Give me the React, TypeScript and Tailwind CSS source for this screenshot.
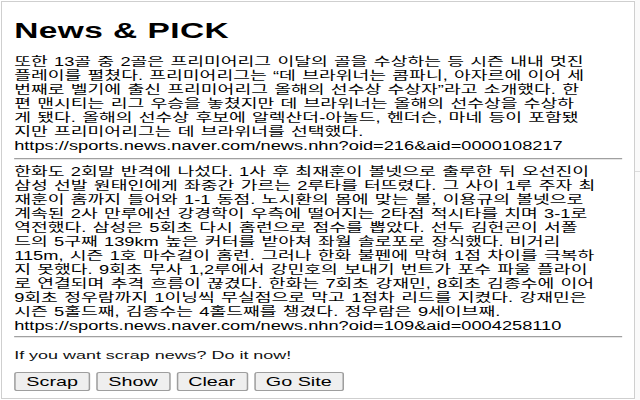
const firstStory = [
  "또한 13골 중 2골은 프리미어리그 이달의 골을 수상하는 등 시즌 내내 멋진",
  "플레이를 펼쳤다. 프리미어리그는 “데 브라위너는 콤파니, 아자르에 이어 세",
  "번째로 벨기에 출신 프리미어리그 올해의 선수상 수상자”라고 소개했다. 한",
  "편 맨시티는 리그 우승을 놓쳤지만 데 브라위너는 올해의 선수상을 수상하",
  "게 됐다. 올해의 선수상 후보에 알렉산더-아놀드, 헨더슨, 마네 등이 포함됐",
  "지만 프리미어리그는 데 브라위너를 선택했다.",
  "https://sports.news.naver.com/news.nhn?oid=216&aid=0000108217",
];

const secondStory = [
  "한화도 2회말 반격에 나섰다. 1사 후 최재훈이 볼넷으로 출루한 뒤 오선진이",
  "삼성 선발 원태인에게 좌중간 가르는 2루타를 터뜨렸다. 그 사이 1루 주자 최",
  "재훈이 홈까지 들어와 1-1 동점. 노시환의 몸에 맞는 볼, 이용규의 볼넷으로",
  "계속된 2사 만루에선 강경학이 우측에 떨어지는 2타점 적시타를 치며 3-1로",
  "역전했다. 삼성은 5회초 다시 홈런으로 점수를 뽑았다. 선두 김헌곤이 서폴",
  "드의 5구째 139km 높은 커터를 받아쳐 좌월 솔로포로 장식했다. 비거리",
  "115m, 시즌 1호 마수걸이 홈런. 그러나 한화 불펜에 막혀 1점 차이를 극복하",
  "지 못했다. 9회초 무사 1,2루에서 강민호의 보내기 번트가 포수 파울 플라이",
  "로 연결되며 추격 흐름이 끊겼다. 한화는 7회초 강재민, 8회초 김종수에 이어",
  "9회초 정우람까지 1이닝씩 무실점으로 막고 1점차 리드를 지켰다. 강재민은",
  "시즌 5홀드째, 김종수는 4홀드째를 챙겼다. 정우람은 9세이브째.",
  "https://sports.news.naver.com/news.nhn?oid=109&aid=0004258110",
];

const actions = ["Scrap", "Show", "Clear", "Go Site"];

const Story = ({ lines, className }: { lines: string[]; className?: string }) => (
  <div className={className}>
    {lines.map((line, i) => (
      <div key={i} className="h-[14px] whitespace-nowrap leading-[14px] [word-spacing:0.8px]">
        {line}
      </div>
    ))}
  </div>
);

const Rule = ({ className }: { className?: string }) => (
  <div className={`h-0 border-t border-b border-t-[#a0a0a0] border-b-[#e6e6e6] ${className ?? ""}`} />
);

export default function App() {
  return (
    <div className="flex h-[400px] w-[640px] bg-white">
      <div className="ml-px mt-px h-[398px] w-[634px] shrink-0 overflow-hidden border border-[#cfcfcf] bg-white">
        {/* popup is 416px wide, stretched to fill the store screenshot */}
        <div className="w-[416px] origin-top-left scale-x-[1.52] px-[8px] font-['Liberation_Sans','Noto_Sans_CJK_KR',sans-serif] text-[12px] text-black">
          <h1 className="pt-[17px] text-[22px] font-bold leading-[24px] tracking-[0.3px]">News &amp; PICK</h1>
          <Story lines={firstStory} className="mt-[12px]" />
          <Rule className="mt-[5px]" />
          <Story lines={secondStory} className="mt-[5px]" />
          <Rule className="mt-[3px]" />
          <p className="mt-[10px] h-[14px] text-[11.8px] leading-[14px] text-[#111]">If you want scrap news? Do it now!</p>
          <div className="mt-[10px] flex gap-[4px]">
            {actions.map((label) => (
              <button
                key={label}
                type="button"
                className="h-[19px] rounded-[2px] border border-[#9e9e9e] bg-[#efefef] px-[7px] text-[13px] leading-[17px] text-black"
              >
                {label}
              </button>
            ))}
          </div>
        </div>
      </div>
      <div className="flex-1 bg-[#fafafa] pt-[171px]">
        <div className="h-px bg-[#dcdcdc]" />
      </div>
    </div>
  );
}
